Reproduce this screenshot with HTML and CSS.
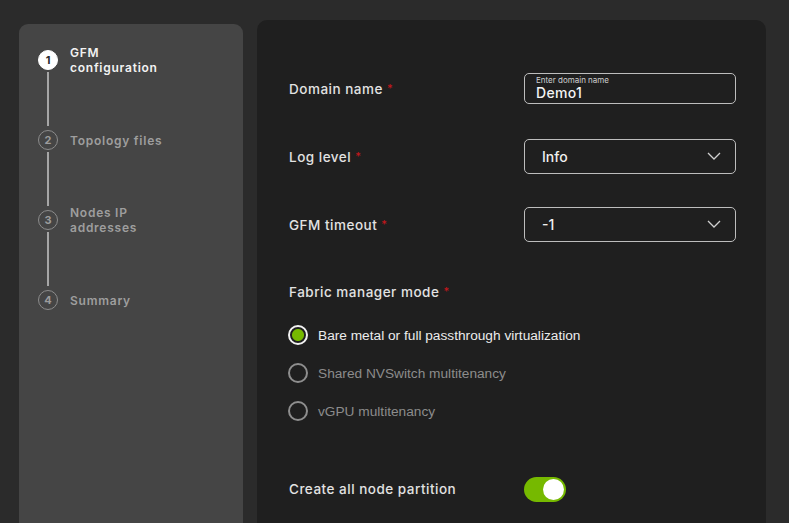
FILE: index.html
```html
<!DOCTYPE html>
<html lang="en">
<head>
<meta charset="utf-8">
<title>GFM configuration</title>
<link rel="stylesheet" href="styles.css">
</head>
<body>
<div class="page">
  <aside class="sidebar">
    <div class="step active">
      <span class="num">1</span>
      <span class="step-label">GFM<br>configuration</span>
    </div>
    <div class="connector"></div>
    <div class="step">
      <span class="num">2</span>
      <span class="step-label">Topology files</span>
    </div>
    <div class="connector"></div>
    <div class="step">
      <span class="num">3</span>
      <span class="step-label">Nodes IP<br>addresses</span>
    </div>
    <div class="connector"></div>
    <div class="step">
      <span class="num">4</span>
      <span class="step-label">Summary</span>
    </div>
  </aside>

  <main class="panel">
    <div class="row">
      <div class="label">Domain name <span class="req">*</span></div>
      <div class="field text-field">
        <span class="float-label">Enter domain name</span>
        <span class="value">Demo1</span>
      </div>
    </div>
    <div class="row">
      <div class="label">Log level <span class="req">*</span></div>
      <div class="field select">
        <span class="value">Info</span>
        <svg class="chev" width="14" height="8" viewBox="0 0 14 8"><path d="M1 1 L7 7 L13 1" fill="none" stroke="#d0d0d0" stroke-width="1.3"/></svg>
      </div>
    </div>
    <div class="row">
      <div class="label">GFM timeout <span class="req">*</span></div>
      <div class="field select">
        <span class="value">-1</span>
        <svg class="chev" width="14" height="8" viewBox="0 0 14 8"><path d="M1 1 L7 7 L13 1" fill="none" stroke="#d0d0d0" stroke-width="1.3"/></svg>
      </div>
    </div>

    <div class="label section-label">Fabric manager mode <span class="req">*</span></div>
    <div class="radios">
      <div class="radio checked"><span class="dot"></span><span class="rtext">Bare metal or full passthrough virtualization</span></div>
      <div class="radio"><span class="dot"></span><span class="rtext">Shared NVSwitch multitenancy</span></div>
      <div class="radio"><span class="dot"></span><span class="rtext">vGPU multitenancy</span></div>
    </div>

    <div class="row toggle-row">
      <div class="label">Create all node partition</div>
      <div class="toggle"><span class="knob"></span></div>
    </div>
  </main>
</div>
</body>
</html>
```

FILE: styles.css
```css
* { box-sizing: border-box; }
html, body { margin: 0; padding: 0; }
body {
  background: #2b2b2b;
  font-family: "Inter", "Open Sans", sans-serif;
  color: #e6e6e6;
  width: 789px;
  height: 523px;
  overflow: hidden;
}
.page {
  display: flex;
  gap: 14px;
  padding-left: 19px;
  height: 523px;
}
.sidebar {
  width: 224px;
  margin-top: 24px;
  height: 520px;
  background: #454545;
  border-radius: 9px 9px 0 0;
  padding: 22px 0 0 19px;
  display: flex;
  flex-direction: column;
}
.step {
  display: flex;
  align-items: center;
  height: 28px;
  gap: 12px;
}
.num {
  width: 20px;
  height: 20px;
  flex: none;
  border-radius: 50%;
  border: 1.5px solid #8c8c8c;
  color: #9c9c9c;
  font-size: 11px;
  font-weight: 700;
  display: flex;
  align-items: center;
  justify-content: center;
}
.step.active .num {
  background: #ffffff;
  border-color: #ffffff;
  color: #2a2a2a;
}
.step-label {
  font-size: 12px;
  font-weight: 600;
  line-height: 15px;
  letter-spacing: 0.75px;
  color: #9e9e9e;
  white-space: nowrap;
}
.step.active .step-label { color: #f2f2f2; }
.connector {
  width: 2px;
  height: 54px;
  margin: -2px 0 0 9px;
  background: #a6a6a6;
}
.panel {
  width: 509px;
  margin-top: 20px;
  height: 520px;
  background: #1f1f1f;
  border-radius: 10px 10px 0 0;
  padding: 34px 30px 0 32px;
  display: flex;
  flex-direction: column;
}
.row {
  display: flex;
  align-items: center;
  height: 68px;
}
.label {
  width: 235px;
  flex: none;
  font-size: 13.5px;
  font-weight: 500;
  letter-spacing: 0.5px;
  color: #e2e2e2;
  line-height: 20px;
}
.req { color: #c4161c; font-size: 11px; vertical-align: 2px; }
.field {
  width: 212px;
  border: 1.5px solid #bdbdbd;
  border-radius: 5px;
}
.text-field {
  height: 31px;
  padding: 1px 11px 0;
  display: flex;
  flex-direction: column;
}
.float-label {
  font-size: 8px;
  line-height: 10px;
  color: #cfcfcf;
}
.text-field .value {
  font-size: 14px;
  line-height: 16px;
  font-weight: 500;
  letter-spacing: 0.3px;
  color: #f4f4f4;
}
.select {
  height: 35px;
  display: flex;
  align-items: center;
  justify-content: space-between;
  padding: 0 14px 0 17px;
}
.select .value {
  font-size: 14px;
  font-weight: 500;
  color: #f0f0f0;
}
.section-label {
  margin-top: 23px;
}
.radios {
  margin-top: 14px;
  display: flex;
  flex-direction: column;
}
.radio {
  display: flex;
  align-items: center;
  height: 38px;
  gap: 10px;
}
.dot {
  width: 20px;
  height: 20px;
  border-radius: 50%;
  border: 2px solid #8e8e8e;
  flex: none;
  margin-left: -1px;
}
.radio.checked .dot {
  border-color: #f2f2f2;
  background: radial-gradient(circle, #76b900 0 5.5px, #1f1f1f 6.5px);
}
.rtext {
  font-family: "Liberation Sans", Arial, sans-serif;
  font-size: 13.7px;
  color: #8c8c8c;
}
.radio.checked .rtext { color: #ececec; }
.toggle-row {
  margin-top: 46px;
  height: 26px;
}
.toggle {
  width: 42px;
  height: 25px;
  border-radius: 13px;
  background: #76b900;
  display: flex;
  align-items: center;
  justify-content: flex-end;
  padding-right: 2px;
}
.knob {
  width: 21px;
  height: 21px;
  border-radius: 50%;
  background: #ffffff;
}
```
